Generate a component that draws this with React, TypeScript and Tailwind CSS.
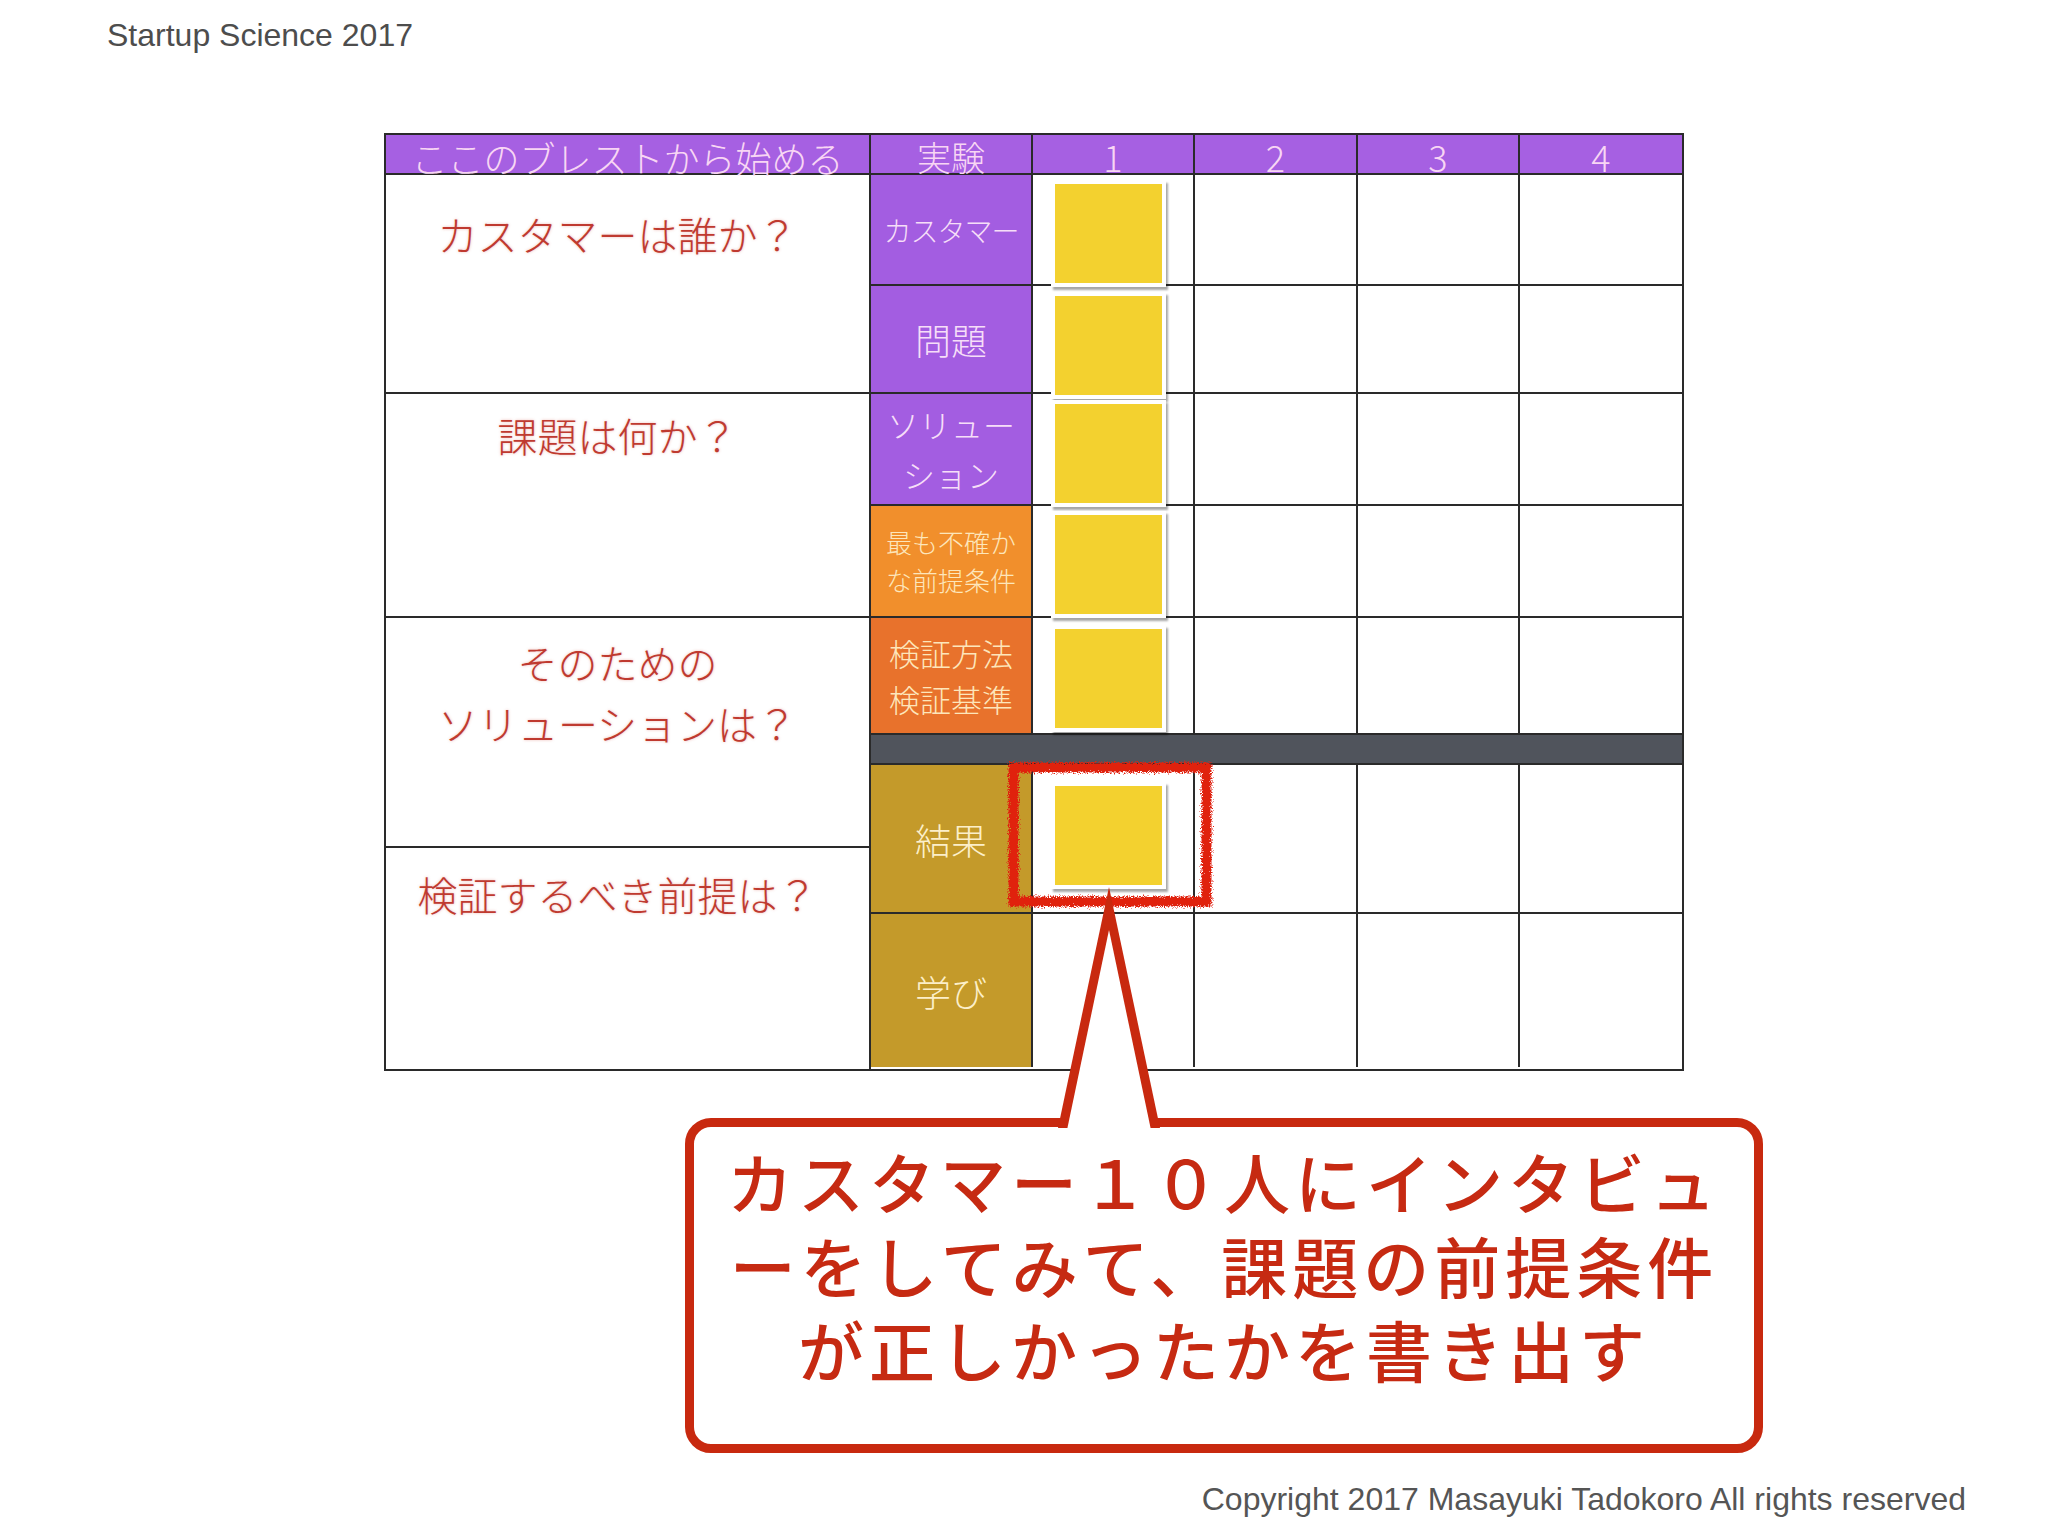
import React from 'react'

const jp = "font-['Noto_Sans_CJK_JP','Noto_Sans_CJK_SC',sans-serif]"

function Sticky({ top }: { top: string }) {
  return (
    <div className={`relative z-10 w-[115px] h-[107px] bg-white p-[4px] shadow-[2px_3px_2px_rgba(0,0,0,0.35)] ${top}`}>
      <div className="w-full h-full bg-[#f3d12f]" />
    </div>
  )
}

function LabelCell({ bg, color, size, lines }: { bg: string; color: string; size: string; lines: string[] }) {
  return (
    <div className={`h-full flex flex-col items-center justify-center border-r-2 border-[#2a2a2a] ${bg} ${color} ${size} font-light`}>
      {lines.map((l) => (
        <span key={l}>{l}</span>
      ))}
    </div>
  )
}

const rows = [
  { h: 'h-[111px]', pt: 'mt-[5px]', label: <LabelCell bg="bg-[#a35de1]" color="text-[#f6def8]" size="text-[28px] leading-[36px] tracking-[-1px]" lines={['カスタマー']} /> },
  { h: 'h-[108px]', pt: 'mt-[6px]', label: <LabelCell bg="bg-[#a35de1]" color="text-[#f6def8]" size="text-[36px] leading-[44px]" lines={['問題']} /> },
  { h: 'h-[112px]', pt: 'mt-[6px]', label: <LabelCell bg="bg-[#a35de1]" color="text-[#f6def8]" size="text-[32px] leading-[50px]" lines={['ソリュー', 'ション']} /> },
  { h: 'h-[112px]', pt: 'mt-[5px]', label: <LabelCell bg="bg-[#f18f2c]" color="text-[#fde6bb]" size="text-[26px] leading-[38px]" lines={['最も不確か', 'な前提条件']} /> },
  { h: 'h-[117px]', pt: 'mt-[7px]', label: <LabelCell bg="bg-[#e8722c]" color="text-[#fde6bb]" size="text-[31px] leading-[46px]" lines={['検証方法', '検証基準']} /> },
]

function EmptyCells() {
  return (
    <>
      <div className="border-r-2 border-[#2a2a2a]" />
      <div className="border-r-2 border-[#2a2a2a]" />
      <div />
    </>
  )
}

const rowGrid = 'grid grid-cols-[162px_162px_163px_162px_162px] grid-rows-1'

export default function App() {
  return (
    <div className="relative w-[2048px] h-[1536px] bg-white overflow-hidden">
      <div className="pl-[107px] pt-[19px] h-[51px] text-[32px] leading-[32px] text-[#4d4d4d] font-['Liberation_Sans',Arial,sans-serif]">
        Startup Science 2017
      </div>

      {/* table */}
      <div className={`ml-[384px] mt-[82px] w-[1300px] border-2 border-[#2a2a2a] ${jp}`}>
        <div className="grid grid-cols-[485px_162px_162px_163px_162px_162px] grid-rows-1 h-[40px] bg-[#a660e2] text-[#f8d6f4] font-light border-b-2 border-[#2a2a2a]">
          <div className="border-r-2 border-[#2a2a2a] text-center text-[36px] leading-[38px] pt-[3px] whitespace-nowrap">ここのブレストから始める</div>
          <div className="border-r-2 border-[#2a2a2a] text-center text-[34px] leading-[38px] pt-[3px]">実験</div>
          <div className="border-r-2 border-[#2a2a2a] text-center text-[36px] leading-[38px] pt-[2px]">1</div>
          <div className="border-r-2 border-[#2a2a2a] text-center text-[36px] leading-[38px] pt-[2px]">2</div>
          <div className="border-r-2 border-[#2a2a2a] text-center text-[36px] leading-[38px] pt-[2px]">3</div>
          <div className="text-center text-[36px] leading-[38px] pt-[2px]">4</div>
        </div>

        <div className="flex h-[894px]">
          {/* left questions column */}
          <div className="w-[485px] flex flex-col border-r-2 border-[#2a2a2a] text-[40px] font-light text-[#bf3a30] text-center [text-shadow:0_0_3px_rgba(210,80,70,0.4)]">
            <div className="h-[219px] border-b-2 border-[#2a2a2a] pt-[39px] leading-[40px] pr-[20px]">カスタマーは誰か？</div>
            <div className="h-[224px] border-b-2 border-[#2a2a2a] pt-[21px] leading-[40px] pr-[20px]">課題は何か？</div>
            <div className="h-[230px] border-b-2 border-[#2a2a2a] pt-[14px] leading-[61px] pr-[20px]">
              <div>そのための</div>
              <div>ソリューションは？</div>
            </div>
            <div className="h-[221px] pt-[26px] leading-[40px] pr-[20px]">検証するべき前提は？</div>
          </div>

          {/* experiment grid */}
          <div className="w-[811px] flex flex-col">
            {rows.map((r, i) => (
              <div key={i} className={`${rowGrid} ${r.h} border-b-2 border-[#2a2a2a]`}>
                {r.label}
                <div className="border-r-2 border-[#2a2a2a] pl-[18px]">
                  <Sticky top={r.pt} />
                </div>
                <EmptyCells />
              </div>
            ))}
            <div className="h-[30px] bg-[#50545c] border-b-2 border-[#2a2a2a]" />
            <div className={`${rowGrid} h-[149px] border-b-2 border-[#2a2a2a]`}>
              <LabelCell bg="bg-[#c49a2a]" color="text-[#fcefc9]" size="text-[36px] leading-[44px]" lines={['結果']} />
              <div className="border-r-2 border-[#2a2a2a] pl-[18px]">
                <Sticky top="mt-[17px]" />
              </div>
              <EmptyCells />
            </div>
            <div className={`${rowGrid} h-[153px]`}>
              <LabelCell bg="bg-[#c49a2a]" color="text-[#fcefc9]" size="text-[36px] leading-[44px]" lines={['学び']} />
              <div className="border-r-2 border-[#2a2a2a]" />
              <EmptyCells />
            </div>
          </div>
        </div>
      </div>

      {/* callout */}
      <div className={`ml-[685px] mt-[47px] w-[1078px] h-[335px] border-[9px] border-[#c8290f] rounded-[26px] bg-white pt-[11px] text-center text-[66px] leading-[84px] tracking-[5px] font-medium text-[#c62a12] ${jp}`}>
        <div>カスタマー１０人にインタビュ</div>
        <div>ーをしてみて、課題の前提条件</div>
        <div>が正しかったかを書き出す</div>
      </div>

      <div className="mt-[30px] pr-[82px] text-right text-[32px] leading-[32px] text-[#555555] font-['Liberation_Sans',Arial,sans-serif]">
        Copyright 2017 Masayuki Tadokoro All rights reserved
      </div>

      {/* hand drawn red highlight */}
      <svg className="absolute left-[1002px] top-[756px] z-20" width="216" height="157" viewBox="0 0 216 157">
        <defs>
          <filter id="rough" x="-10%" y="-10%" width="120%" height="120%">
            <feTurbulence type="fractalNoise" baseFrequency="0.8" numOctaves="2" seed="4" result="n" />
            <feDisplacementMap in="SourceGraphic" in2="n" scale="8" xChannelSelector="R" yChannelSelector="G" />
          </filter>
        </defs>
        <rect x="11.5" y="11.5" width="193" height="134" fill="none" stroke="#e0220f" strokeWidth="10" filter="url(#rough)" />
      </svg>

      {/* callout pointer */}
      <svg className="absolute left-[1050px] top-[880px] z-20" width="120" height="255" viewBox="0 0 120 255">
        <polygon points="59,7 8,248 110,248" fill="#c8290f" />
        <polygon points="59,50 17,250 101,250" fill="#ffffff" />
      </svg>
    </div>
  )
}
